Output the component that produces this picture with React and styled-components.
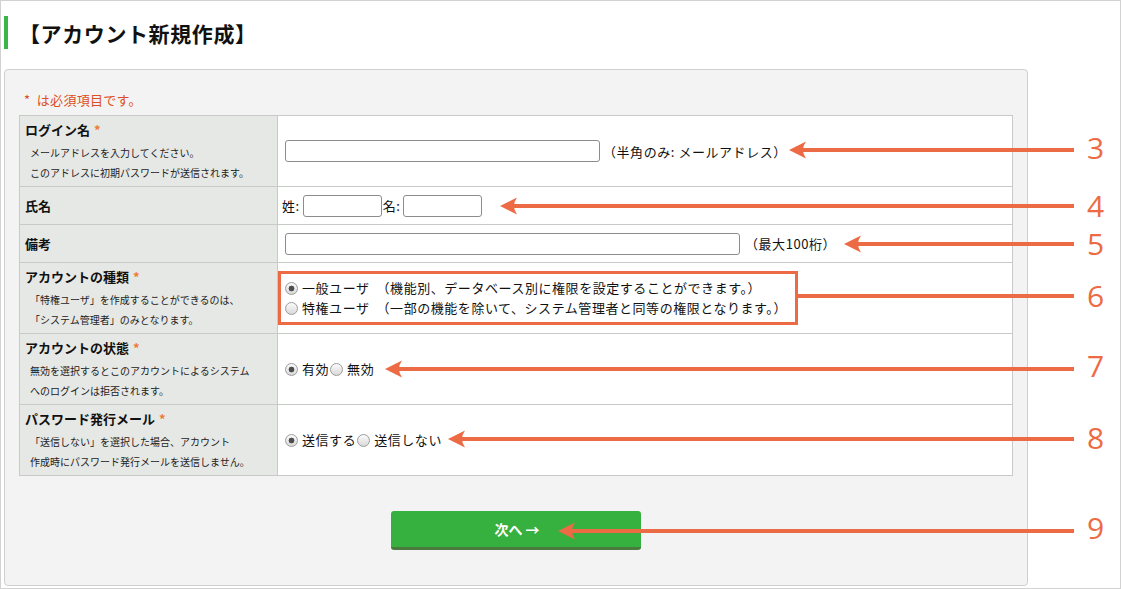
import React from 'react';
import styled, { createGlobalStyle } from 'styled-components';

const ORANGE = '#ec6b45';

const GlobalStyle = createGlobalStyle`
  html, body { margin: 0; padding: 0; background: #fff; }
  body {
    font-family: "Noto Sans CJK JP", "Noto Sans", sans-serif;
    color: #1a1a1a;
  }
  * { box-sizing: border-box; }
`;

const Page = styled.div`
  position: relative;
  width: 1121px;
  height: 589px;
  border: 1px solid #d2d2d2;
  padding: 15px 0 0 3px;
  overflow: hidden;
`;

const Title = styled.h1`
  margin: 0;
  height: 33px;
  display: flex;
  align-items: center;
  border-left: 4px solid #3bb54a;
  padding-left: 11px;
  font-size: 21px;
  font-weight: bold;
  letter-spacing: 0.6px;
  color: #111;
`;

const Panel = styled.div`
  margin-top: 20px;
  width: 1024px;
  border: 1px solid #cfcfcf;
  border-radius: 4px;
  background: #f3f3f3;
  padding: 22px 14px 35px;
`;

const Note = styled.p`
  margin: 0 0 7px 5px;
  font-size: 13px;
  line-height: 16px;
  letter-spacing: 0.3px;
  color: #dd4f22;
  white-space: pre;
`;

const Table = styled.div`
  background: #fff;
  border: 1px solid #c9c9c9;
  border-bottom: none;
`;

const Row = styled.div`
  display: grid;
  grid-template-columns: 258px 1fr;
  height: ${p => (p.$tall ? 71 : 38)}px;
  border-bottom: 1px solid #c9c9c9;
`;

const LabelCell = styled.div`
  background: #e6e8e5;
  border-right: 1px solid #c9c9c9;
  padding: ${p => (p.$tall ? '4px 5px 0' : '0 5px')};
  display: flex;
  flex-direction: column;
  justify-content: ${p => (p.$tall ? 'flex-start' : 'center')};
`;

const LabelTitle = styled.div`
  font-size: 13px;
  font-weight: bold;
  line-height: 20px;
  color: #111;
`;

const Required = styled.span`
  color: #ee7a33;
  margin-left: 4px;
`;

const Help = styled.div`
  margin-top: 3px;
  padding-left: 5px;
  font-size: 10px;
  line-height: 20px;
  color: #222;
  & + & { margin-top: 0; }
`;

const FieldCell = styled.div`
  display: flex;
  align-items: center;
  padding-left: ${p => p.$pl ?? 7}px;
  font-size: 13px;
  letter-spacing: 0.55px;
  color: #111;
`;

const TextInput = styled.input`
  width: ${p => p.$w}px;
  height: 22px;
  border: 1px solid #8c8c8c;
  border-radius: 3px;
  background: #fff;
  margin: 0 ${p => p.$gap ?? 3}px 0 ${p => p.$ml ?? 0}px;
  padding: 0 4px;
  font: inherit;
`;

const Hint = styled.span`
  font-size: 13px;
`;

const NameLabel = styled.span``;

const RadioGroup = styled.div`
  display: flex;
  flex-direction: ${p => (p.$stack ? 'column' : 'row')};
  gap: ${p => (p.$stack ? 0 : 1)}px;
  ${p => p.$highlight && `
    outline: 3px solid ${ORANGE};
    outline-offset: 4px;
    padding-right: 4px;
  `}
`;

const RadioLabel = styled.label`
  display: inline-flex;
  align-items: center;
  height: 20px;
  line-height: 20px;
  white-space: pre;
`;

const Radio = styled.input.attrs({ type: 'radio' })`
  appearance: none;
  width: 13px;
  height: 13px;
  margin: 0 4px 0 0;
  border: 1px solid #9c9c9c;
  border-radius: 50%;
  background: linear-gradient(#fbfbfb, #d9d9d9);
  &:checked {
    background:
      radial-gradient(circle, #4d4d4d 0 2.6px, transparent 3.2px),
      linear-gradient(#fbfbfb, #d9d9d9);
  }
`;

const ButtonRow = styled.div`
  display: flex;
  justify-content: center;
  margin-top: 35px;
`;

const NextButton = styled.button`
  width: 250px;
  height: 39px;
  border: none;
  border-bottom: 3px solid #4a7a3c;
  border-radius: 3px;
  background: #36b03f;
  color: #fff;
  font-family: inherit;
  font-size: 14px;
  font-weight: bold;
  white-space: pre;
  padding-right: 4px;
  cursor: pointer;
`;

const Arrow = styled.div`
  position: absolute;
  top: ${p => p.$y - 2}px;
  left: ${p => p.$x}px;
  width: ${p => 1073 - p.$x}px;
  height: 4px;
  pointer-events: none;
  &::before {
    content: '';
    position: absolute;
    left: ${p => (p.$head ? 10 : 0)}px;
    right: 0;
    top: 0;
    height: 4px;
    background: ${ORANGE};
  }
  svg {
    position: absolute;
    left: 0;
    top: -7px;
  }
`;

const Num = styled.div`
  position: absolute;
  left: 1086px;
  top: ${p => p.$y - 20}px;
  height: 40px;
  line-height: 40px;
  font-family: "Open Sans", "Noto Sans", sans-serif;
  font-size: 30px;
  color: ${ORANGE};
`;

const callouts = [
  { n: 3, y: 149, x: 788, head: true, ny: 147 },
  { n: 4, y: 205, x: 499, head: true, ny: 205 },
  { n: 5, y: 243, x: 843, head: true, ny: 243 },
  { n: 6, y: 295, x: 797, head: false, ny: 295 },
  { n: 7, y: 368, x: 384, head: true, ny: 365 },
  { n: 8, y: 438, x: 447, head: true, ny: 437 },
  { n: 9, y: 530, x: 557, head: true, ny: 527 },
];

const Callout = ({ n, y, x, head, ny }) => (
  <>
    <Arrow $x={x} $y={y} $head={head}>
      {head && (
        <svg width="18" height="18" viewBox="0 0 18 18">
          <path d="M0 9 L17 0.5 Q11 9 17 17.5 Z" fill={ORANGE} />
        </svg>
      )}
    </Arrow>
    <Num $y={ny}>{n}</Num>
  </>
);

export default function App() {
  return (
    <Page>
      <GlobalStyle />
      <Title>【アカウント新規作成】</Title>
      <Panel>
        <Note>*  は必須項目です。</Note>
        <Table>
          <Row $tall>
            <LabelCell $tall>
              <LabelTitle>ログイン名<Required>*</Required></LabelTitle>
              <Help>メールアドレスを入力してください。</Help>
              <Help>このアドレスに初期パスワードが送信されます。</Help>
            </LabelCell>
            <FieldCell>
              <TextInput $w={315} />
              <Hint>（半角のみ: メールアドレス）</Hint>
            </FieldCell>
          </Row>
          <Row>
            <LabelCell>
              <LabelTitle>氏名</LabelTitle>
            </LabelCell>
            <FieldCell $pl={4}>
              <NameLabel>姓:</NameLabel>
              <TextInput $w={79} $ml={3} $gap={1} />
              <NameLabel>名:</NameLabel>
              <TextInput $w={79} $ml={3} />
            </FieldCell>
          </Row>
          <Row>
            <LabelCell>
              <LabelTitle>備考</LabelTitle>
            </LabelCell>
            <FieldCell>
              <TextInput $w={455} $gap={5} />
              <Hint>（最大100桁）</Hint>
            </FieldCell>
          </Row>
          <Row $tall>
            <LabelCell $tall>
              <LabelTitle>アカウントの種類<Required>*</Required></LabelTitle>
              <Help>「特権ユーザ」を作成することができるのは、</Help>
              <Help>「システム管理者」のみとなります。</Help>
            </LabelCell>
            <FieldCell>
              <RadioGroup $stack $highlight>
                <RadioLabel>
                  <Radio name="kind" defaultChecked />
                  一般ユーザ　（機能別、データベース別に権限を設定することができます。）
                </RadioLabel>
                <RadioLabel>
                  <Radio name="kind" />
                  特権ユーザ　（一部の機能を除いて、システム管理者と同等の権限となります。）
                </RadioLabel>
              </RadioGroup>
            </FieldCell>
          </Row>
          <Row $tall>
            <LabelCell $tall>
              <LabelTitle>アカウントの状態<Required>*</Required></LabelTitle>
              <Help>無効を選択するとこのアカウントによるシステム</Help>
              <Help>へのログインは拒否されます。</Help>
            </LabelCell>
            <FieldCell>
              <RadioGroup>
                <RadioLabel><Radio name="state" defaultChecked />有効</RadioLabel>
                <RadioLabel><Radio name="state" />無効</RadioLabel>
              </RadioGroup>
            </FieldCell>
          </Row>
          <Row $tall>
            <LabelCell $tall>
              <LabelTitle>パスワード発行メール<Required>*</Required></LabelTitle>
              <Help>「送信しない」を選択した場合、アカウント</Help>
              <Help>作成時にパスワード発行メールを送信しません。</Help>
            </LabelCell>
            <FieldCell>
              <RadioGroup>
                <RadioLabel><Radio name="mail" defaultChecked />送信する</RadioLabel>
                <RadioLabel><Radio name="mail" />送信しない</RadioLabel>
              </RadioGroup>
            </FieldCell>
          </Row>
        </Table>
        <ButtonRow>
          <NextButton type="button">次へ →</NextButton>
        </ButtonRow>
      </Panel>
      {callouts.map(c => <Callout key={c.n} {...c} />)}
    </Page>
  );
}
